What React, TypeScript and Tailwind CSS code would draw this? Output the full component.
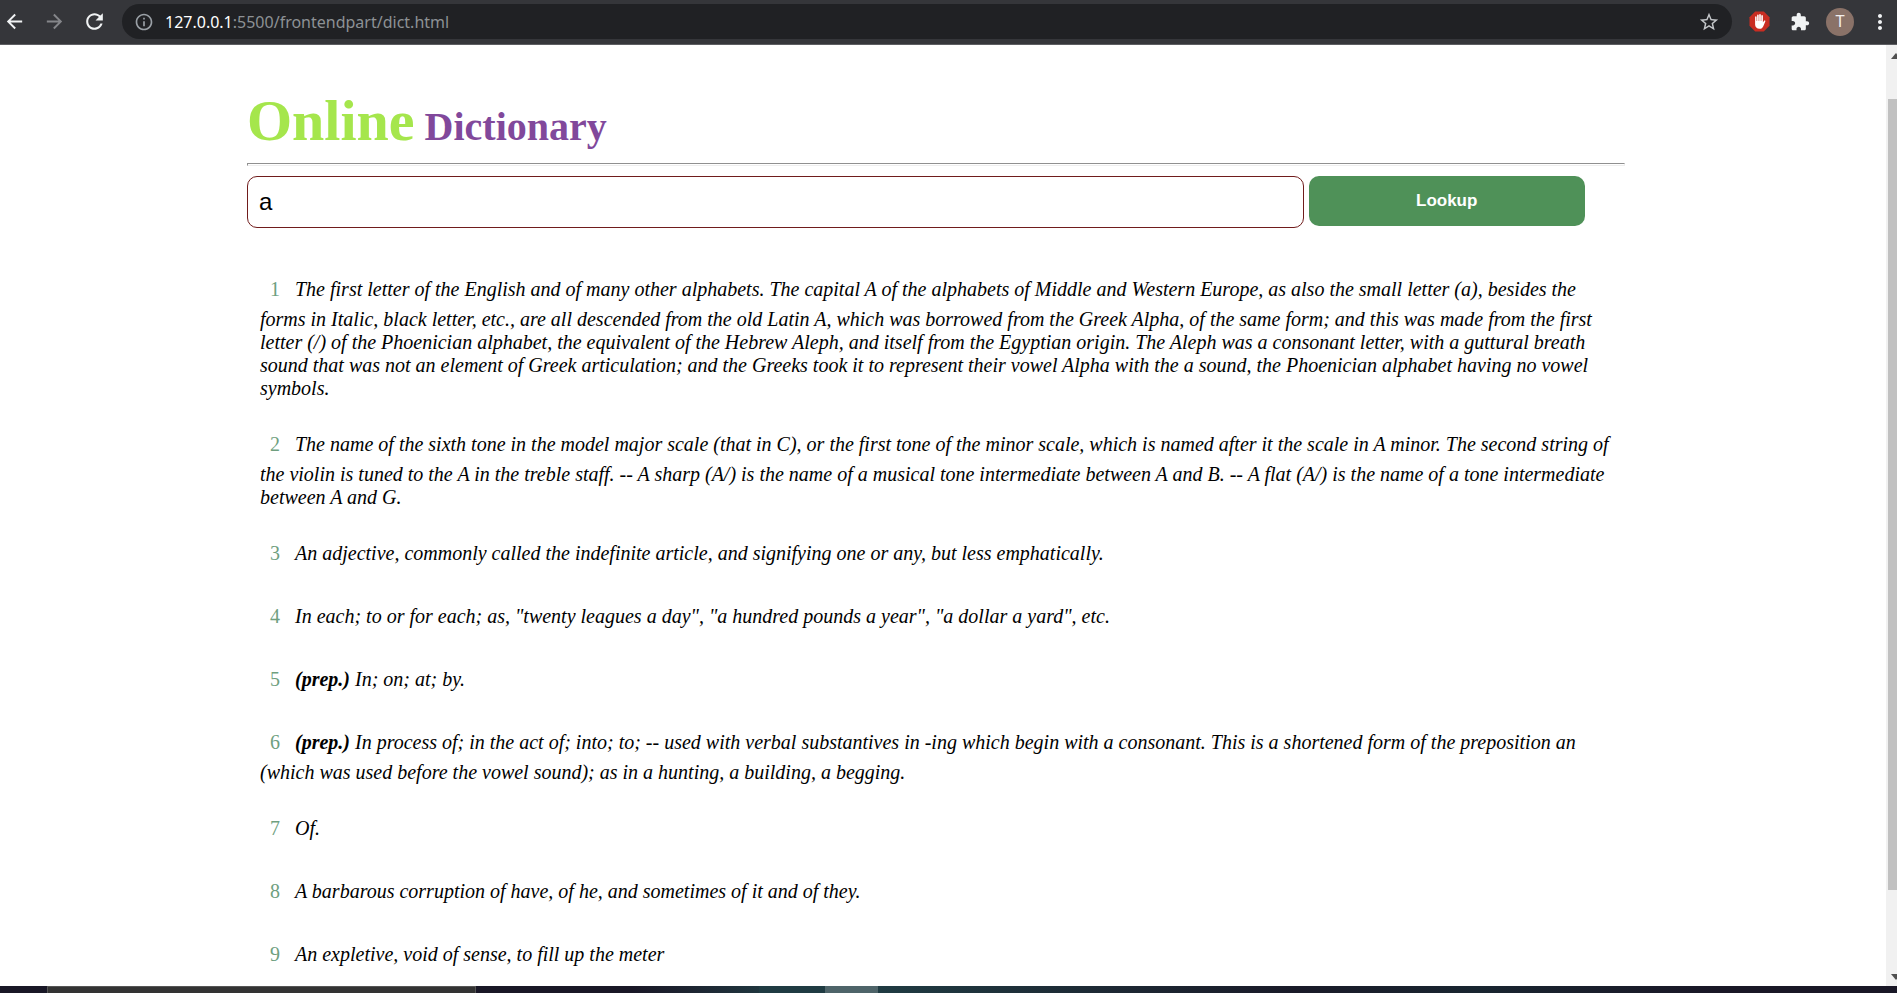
import React from "react";

type Definition = { kind?: string; text: string };

const definitions: Definition[] = [
  {
    text: "The first letter of the English and of many other alphabets. The capital A of the alphabets of Middle and Western Europe, as also the small letter (a), besides the forms in Italic, black letter, etc., are all descended from the old Latin A, which was borrowed from the Greek Alpha, of the same form; and this was made from the first letter (/) of the Phoenician alphabet, the equivalent of the Hebrew Aleph, and itself from the Egyptian origin. The Aleph was a consonant letter, with a guttural breath sound that was not an element of Greek articulation; and the Greeks took it to represent their vowel Alpha with the a sound, the Phoenician alphabet having no vowel symbols.",
  },
  {
    text: "The name of the sixth tone in the model major scale (that in C), or the first tone of the minor scale, which is named after it the scale in A minor. The second string of the violin is tuned to the A in the treble staff. -- A sharp (A/) is the name of a musical tone intermediate between A and B. -- A flat (A/) is the name of a tone intermediate between A and G.",
  },
  { text: "An adjective, commonly called the indefinite article, and signifying one or any, but less emphatically." },
  { text: 'In each; to or for each; as, "twenty leagues a day", "a hundred pounds a year", "a dollar a yard", etc.' },
  { kind: "(prep.)", text: "In; on; at; by." },
  {
    kind: "(prep.)",
    text: "In process of; in the act of; into; to; -- used with verbal substantives in -ing which begin with a consonant. This is a shortened form of the preposition an (which was used before the vowel sound); as in a hunting, a building, a begging.",
  },
  { text: "Of." },
  { text: "A barbarous corruption of have, of he, and sometimes of it and of they." },
  { text: "An expletive, void of sense, to fill up the meter" },
];

function Icon({ d, className }: { d: string; className: string }) {
  return (
    <svg viewBox="0 0 24 24" fill="currentColor" className={className} aria-hidden="true">
      <path d={d} />
    </svg>
  );
}

function BrowserBar() {
  return (
    <header className="flex h-[45px] shrink-0 items-center border-b border-[#5d5e62] bg-[#35363a] pb-px font-['Noto_Sans','Open_Sans',sans-serif]">
      <button aria-label="Back" className="ml-[3px] text-[#f1f3f4]">
        <Icon className="size-[23px]" d="M20 11H7.83l5.59-5.59L12 4l-8 8 8 8 1.41-1.41L7.83 13H20v-2z" />
      </button>
      <button aria-label="Forward" className="ml-[17px] text-[#85868a]">
        <Icon className="size-[23px]" d="M12 4l-1.41 1.41L16.17 11H4v2h12.17l-5.58 5.59L12 20l8-8z" />
      </button>
      <button aria-label="Reload" className="ml-4 text-[#f1f3f4]">
        <Icon
          className="size-[25px]"
          d="M17.65 6.35C16.2 4.9 14.21 4 12 4c-4.42 0-7.99 3.58-7.99 8s3.57 8 7.99 8c3.73 0 6.84-2.55 7.73-6h-2.08c-.82 2.33-3.04 4-5.65 4-3.31 0-6-2.69-6-6s2.69-6 6-6c1.66 0 3.14.69 4.22 1.78L13 11h7V4l-2.35 2.35z"
        />
      </button>
      <div className="ml-[15px] flex h-[35px] min-w-0 flex-1 items-center rounded-full bg-[#202124] pr-3 pl-3">
        <Icon
          className="size-5 text-[#9aa0a6]"
          d="M11 7h2v2h-2zm0 4h2v6h-2zm1-9C6.48 2 2 6.48 2 12s4.48 10 10 10 10-4.48 10-10S17.52 2 12 2zm0 18c-4.41 0-8-3.59-8-8s3.59-8 8-8 8 3.59 8 8-3.59 8-8 8z"
        />
        <p className="ml-[11px] flex-1 text-base leading-6 text-[#8d9195]">
          <span className="text-white">127.0.0.1</span>:5500/frontendpart/dict.html
        </p>
        <button aria-label="Bookmark this page" className="text-[#c4c7ca]">
          <Icon
            className="size-[22px]"
            d="M22 9.24l-7.19-.62L12 2 9.19 8.63 2 9.24l5.46 4.73L5.82 21 12 17.27 18.18 21l-1.63-7.03L22 9.24zM12 15.4l-3.76 2.27 1-4.28-3.32-2.88 4.38-.38L12 6.1l1.71 4.04 4.38.38-3.32 2.88 1 4.28L12 15.4z"
          />
        </button>
      </div>
      <button aria-label="Ad blocker" className="ml-[17px]">
        <svg viewBox="0 0 21 21" className="size-[21px]" aria-hidden="true">
          <path d="M6.2.5h8.6l5.7 5.7v8.6l-5.7 5.7H6.2L.5 14.8V6.2z" fill="#c92d22" />
          <path
            d="M6.1 6.1c0-1.1 1.5-1.1 1.5 0V10h.5V4.5c0-1.2 1.6-1.2 1.6 0V10h.5V3.8c0-1.2 1.6-1.2 1.6 0V10h.5V5c0-1.2 1.6-1.2 1.6 0v6.6l1-1.6c.5-.9 1.8-.5 1.4.5l-2 4.7c-.7 1.7-1.9 2.6-3.8 2.6-2.7 0-4.4-1.7-4.4-4.3z"
            fill="#fff"
          />
        </svg>
      </button>
      <button aria-label="Extensions" className="ml-5 text-[#f1f3f4]">
        <Icon
          className="size-5"
          d="M20.5 11H19V7c0-1.1-.9-2-2-2h-4V3.5C13 2.12 11.88 1 10.5 1S8 2.12 8 3.5V5H4c-1.1 0-1.99.9-1.99 2v3.8H3.5c1.49 0 2.7 1.21 2.7 2.7s-1.21 2.7-2.7 2.7H2V20c0 1.1.9 2 2 2h3.8v-1.5c0-1.49 1.21-2.7 2.7-2.7 1.49 0 2.7 1.21 2.7 2.7V22H17c1.1 0 2-.9 2-2v-4h1.5c1.38 0 2.5-1.12 2.5-2.5S21.88 11 20.5 11z"
        />
      </button>
      <button
        aria-label="Profile"
        className="ml-4 flex size-7 items-center justify-center rounded-full bg-[#8a7268] font-[Roboto,sans-serif] text-base leading-none text-[#f3eeec]"
      >
        T
      </button>
      <button aria-label="Menu" className="mr-[5px] ml-[14px] text-[#f1f3f4]">
        <Icon
          className="size-6"
          d="M12 8c1.1 0 2-.9 2-2s-.9-2-2-2-2 .9-2 2 .9 2 2 2zm0 2c-1.1 0-2 .9-2 2s.9 2 2 2 2-.9 2-2-.9-2-2-2zm0 6c-1.1 0-2 .9-2 2s.9 2 2 2 2-.9 2-2-.9-2-2-2z"
        />
      </button>
    </header>
  );
}

function ScrollTrack() {
  return (
    <div className="flex w-[11px] shrink-0 flex-col overflow-hidden bg-[#f1f1f1] pt-2 pb-[6px] pl-[2px]">
      <svg viewBox="0 0 10 6" className="ml-[3px] h-[6px] w-[10px] shrink-0 fill-[#505050]" aria-hidden="true">
        <path d="M0 6 5 0l5 6z" />
      </svg>
      <div className="mt-10 w-full flex-[94] bg-[#c1c1c1]" />
      <div className="flex-[10]" />
      <svg viewBox="0 0 10 6" className="ml-[3px] h-[6px] w-[10px] shrink-0 fill-[#505050]" aria-hidden="true">
        <path d="M0 0h10L5 6z" />
      </svg>
    </div>
  );
}

function Taskbar() {
  return (
    <footer className="flex h-[7px] shrink-0 bg-[#191726]">
      <div className="w-[2.5%]" />
      <div className="w-[22.6%] border border-b-0 border-[#555] bg-[#333]" />
      <div className="w-[14.9%] bg-linear-to-r from-[#191726] from-55% to-[#1f353e]" />
      <div className="w-[3.5%] bg-[#1f3b42]" />
      <div className="w-[2.8%] bg-[#4e6469]" />
      <div className="w-[22%] bg-linear-to-r from-[#1f3b42] to-[#191a28]" />
      <div className="flex-1 bg-linear-to-r from-[#191a28] via-[#182530] via-30% to-[#191726] to-70%" />
    </footer>
  );
}

export default function App() {
  return (
    <div className="flex h-screen flex-col bg-white">
      <BrowserBar />
      <div className="flex min-h-0 flex-1">
        <main className="min-w-0 flex-1 overflow-hidden font-['Liberation_Serif',serif] text-black">
          <div className="mr-[261px] ml-[247px] pt-[43px]">
            <h1 className="text-[40px] leading-[66px] font-bold text-[#81489b]">
              <span className="text-[58px] text-[#a5e64c]">Online</span> Dictionary
            </h1>
            <hr className="mt-[3px] h-[3px] border border-[#eee] border-t-[#909090] border-l-[#909090]" />
            <form className="mt-[10px] flex items-start gap-[5px]" onSubmit={(e) => e.preventDefault()}>
              <input
                type="text"
                aria-label="Word to look up"
                defaultValue="a"
                className="h-[52px] w-[76.7%] rounded-[10px] border border-[#701c1c] px-[11px] font-['Liberation_Sans',sans-serif] text-2xl outline-none"
              />
              <button
                type="submit"
                className="h-[50px] w-[20%] rounded-[10px] bg-[#4f9158] font-['Liberation_Sans',sans-serif] text-[17px] font-bold text-white"
              >
                Lookup
              </button>
            </form>
            <ol className="mt-11 flex flex-col gap-[27px] px-[13px] text-[20px] leading-[23px]">
              {definitions.map((definition, index) => (
                <li key={index} className="italic">
                  <span className="mr-[15px] ml-[10px] inline-block pt-[6px] pb-[7px] text-[#6f9f7f] not-italic">
                    {index + 1}
                  </span>
                  {definition.kind && <b>{definition.kind} </b>}
                  {definition.text}
                </li>
              ))}
            </ol>
          </div>
        </main>
        <ScrollTrack />
      </div>
      <Taskbar />
    </div>
  );
}
